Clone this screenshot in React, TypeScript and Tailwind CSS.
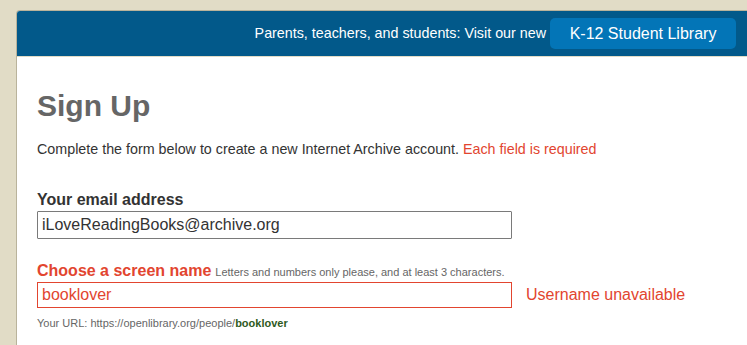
export default function App() {
  return (
    <div className="min-h-[345px] bg-[#e1dcc6] pt-[10px] pl-[16px] font-['Liberation_Sans',Arial,sans-serif]">
      <div className="h-[335px] overflow-hidden rounded-tl-[4px] border-l border-t border-[#b9b39b] bg-white">
        {/* banner */}
        <div className="flex h-[46px] items-center justify-end border-b border-[#e1dcc6] bg-[#02598a] pr-[11px]">
          <span className="mr-[4px] text-[14.3px] text-white">
            Parents, teachers, and students: Visit our new
          </span>
          <a className="flex h-[31px] w-[186px] items-center justify-center rounded-[5px] bg-[#0375b7] text-[16px] text-white">
            K-12 Student Library
          </a>
        </div>

        <div className="px-[20px] pt-[32px]">
          <h1 className="text-[30px] font-bold leading-[34px] text-[#666666]">Sign Up</h1>

          <p className="mt-[17px] text-[14.3px] leading-[18px] text-[#333333]">
            Complete the form below to create a new Internet Archive account.{" "}
            <span className="text-[#e2452f]">Each field is required</span>
          </p>

          <div className="mt-[32px]">
            <label className="block text-[16px] font-bold leading-[20px] text-[#333333]">
              Your email address
            </label>
            <div className="mt-[1px] flex h-[28px] w-[475px] items-center rounded-[1px] border border-[#7a7a7a] px-[4px] text-[16px] text-[#333333]">
              iLoveReadingBooks@archive.org
            </div>
          </div>

          <div className="mt-[22px]">
            <div className="flex items-baseline leading-[20px]">
              <label className="text-[16px] font-bold text-[#e2452f]">Choose a screen name</label>
              <span className="ml-[4px] text-[11px] text-[#666666]">
                Letters and numbers only please, and at least 3 characters.
              </span>
            </div>
            <div className="flex items-center">
              <div className="flex h-[26px] w-[475px] items-center border border-[#e2452f] px-[4px] text-[16px] text-[#e2452f]">
                booklover
              </div>
              <span className="ml-[14px] text-[16px] text-[#e2452f]">Username unavailable</span>
            </div>
            <p className="mt-[8px] text-[11px] leading-[14px] text-[#666666]">
              Your URL: https://openlibrary.org/people/
              <span className="font-bold text-[#2e5a1e]">booklover</span>
            </p>
          </div>
        </div>
      </div>
    </div>
  );
}
